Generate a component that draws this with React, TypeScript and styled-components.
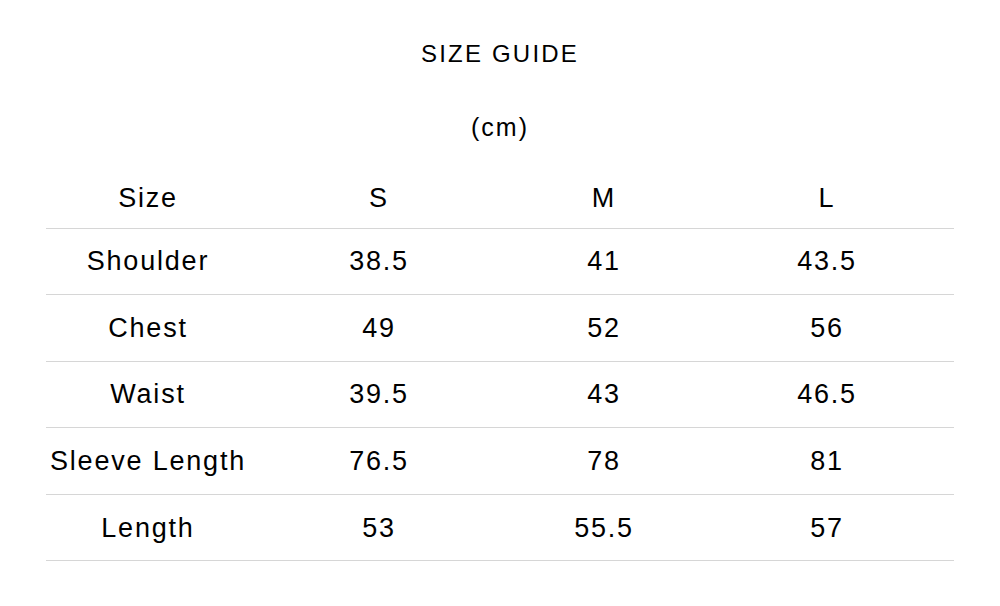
import React from 'react';
import styled, { createGlobalStyle } from 'styled-components';

const GlobalStyle = createGlobalStyle`
  html, body {
    margin: 0;
    padding: 0;
    background: #ffffff;
  }
  body {
    font-family: 'Liberation Sans', Arial, sans-serif;
    color: #000000;
  }
`;

const Page = styled.div`
  width: 1000px;
  height: 606px;
  display: flex;
  flex-direction: column;
  align-items: center;
  padding-top: 38px;
  box-sizing: border-box;
`;

const Title = styled.h1`
  margin: 0;
  font-size: 24px;
  font-weight: 400;
  letter-spacing: 2.2px;
  line-height: 32px;
`;

const Unit = styled.div`
  margin-top: 41px;
  font-size: 25px;
  letter-spacing: 2px;
  line-height: 32px;
`;

const Table = styled.div`
  margin-top: 23px;
  width: 908px;
  display: flex;
  flex-direction: column;
`;

const Row = styled.div<{ $header?: boolean }>`
  display: grid;
  grid-template-columns: 202px 260px 190px 256px;
  height: ${p => (p.$header ? '62.5px' : '66.6px')};
  padding-top: ${p => (p.$header ? '2px' : '0')};
  box-sizing: border-box;
  align-items: center;
  border-bottom: 1.5px solid #d6d6d6;
`;

const Cell = styled.div`
  text-align: center;
  font-size: 27px;
  letter-spacing: 1.8px;
  line-height: 30px;
  padding-left: 2px;
`;

const sizes = ['S', 'M', 'L'];

const rows: [string, string[]][] = [
  ['Shoulder', ['38.5', '41', '43.5']],
  ['Chest', ['49', '52', '56']],
  ['Waist', ['39.5', '43', '46.5']],
  ['Sleeve Length', ['76.5', '78', '81']],
  ['Length', ['53', '55.5', '57']],
];

export default function App() {
  return (
    <>
      <GlobalStyle />
      <Page>
        <Title>SIZE GUIDE</Title>
        <Unit>(cm)</Unit>
        <Table>
          <Row $header>
            <Cell>Size</Cell>
            {sizes.map(s => (
              <Cell key={s}>{s}</Cell>
            ))}
          </Row>
          {rows.map(([label, values]) => (
            <Row key={label}>
              <Cell>{label}</Cell>
              {values.map((v, i) => (
                <Cell key={i}>{v}</Cell>
              ))}
            </Row>
          ))}
        </Table>
      </Page>
    </>
  );
}
